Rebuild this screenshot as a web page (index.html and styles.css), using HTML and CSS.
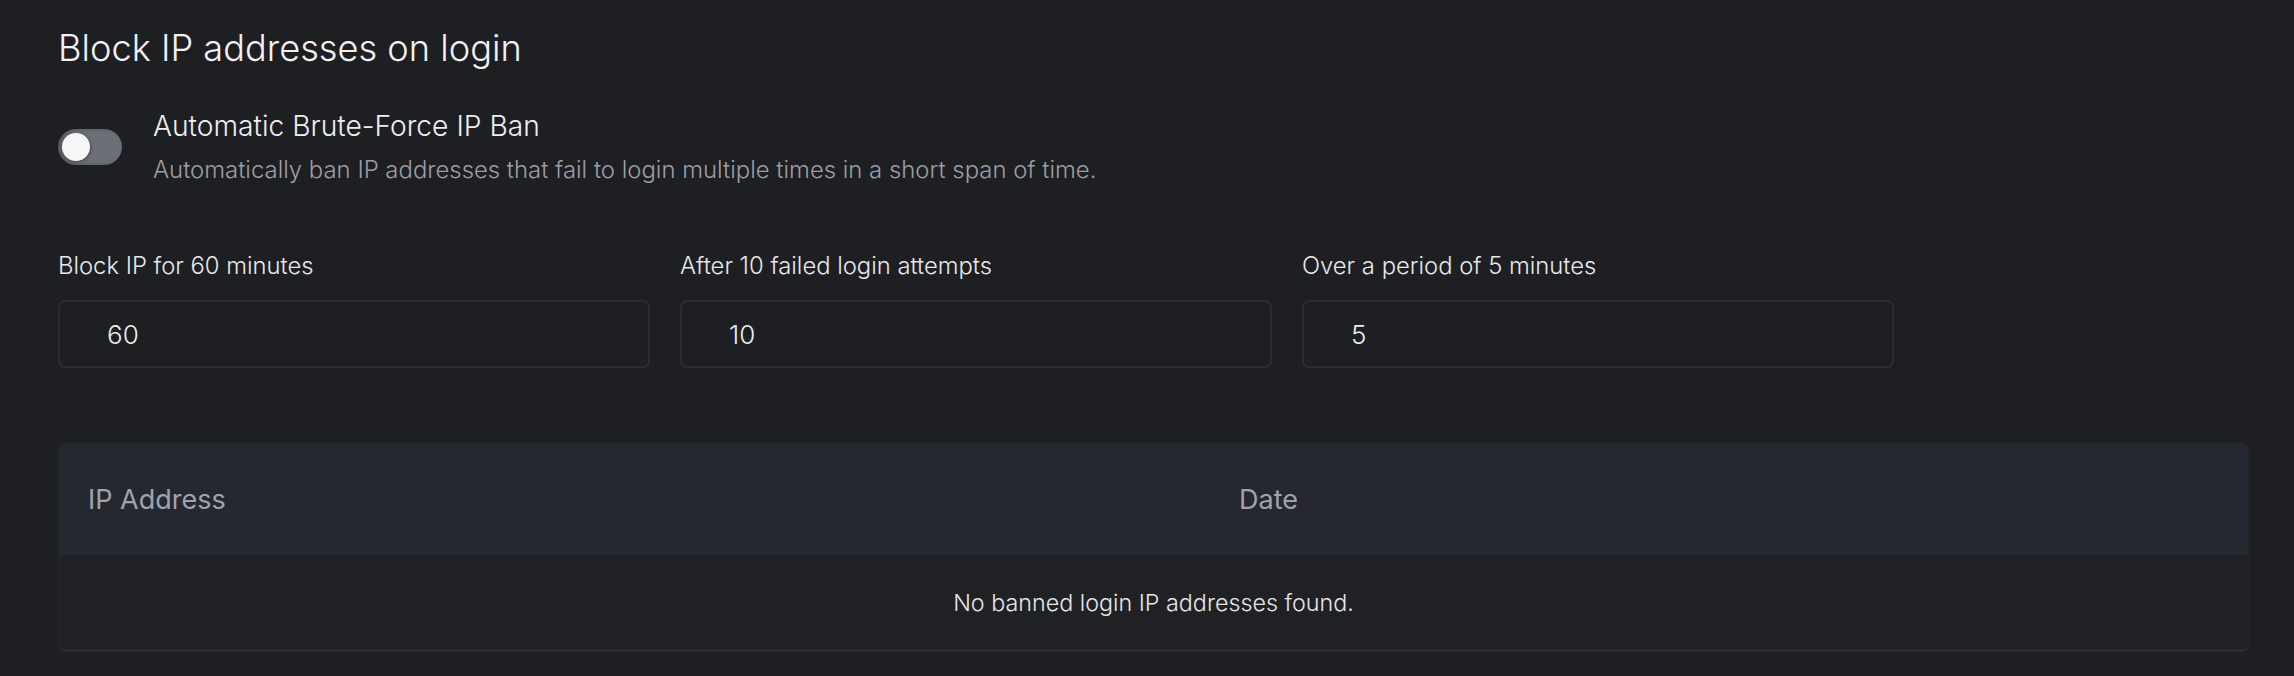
FILE: index.html
```html
<!DOCTYPE html>
<html lang="en">
<head>
<meta charset="utf-8">
<title>Block IP addresses on login</title>
<link rel="stylesheet" href="styles.css">
</head>
<body>
<div class="page">
  <h2 class="title">Block IP addresses on login</h2>

  <div class="toggle-row">
    <span class="switch"><span class="knob"></span></span>
    <div class="toggle-text">
      <div class="toggle-label">Automatic Brute-Force IP Ban</div>
      <div class="toggle-desc">Automatically ban IP addresses that fail to login multiple times in a short span of time.</div>
    </div>
  </div>

  <div class="fields">
    <label class="field">
      <span class="field-label">Block IP for 60 minutes</span>
      <input class="field-input" type="text" value="60">
    </label>
    <label class="field">
      <span class="field-label">After 10 failed login attempts</span>
      <input class="field-input" type="text" value="10">
    </label>
    <label class="field">
      <span class="field-label">Over a period of 5 minutes</span>
      <input class="field-input" type="text" value="5">
    </label>
  </div>

  <div class="table-wrap">
    <table class="bans">
      <thead>
        <tr>
          <th class="col-ip">IP Address</th>
          <th class="col-date">Date</th>
        </tr>
      </thead>
      <tbody>
        <tr>
          <td class="empty" colspan="2">No banned login IP addresses found.</td>
        </tr>
      </tbody>
    </table>
  </div>
</div>
</body>
</html>
```

FILE: styles.css
```css
* { box-sizing: border-box; }

html, body {
  margin: 0;
  background: #1e1f23;
}

body {
  font-family: "Inter", "Liberation Sans", sans-serif;
  font-weight: 300;
  color: #ececee;
}

.page {
  padding: 28px 45px 0 58px;
}

.title {
  margin: 0;
  font-size: 36.2px;
  line-height: 40px;
  font-weight: 300;
  color: #f2f2f4;
}

.toggle-row {
  display: flex;
  gap: 31px;
  margin-top: 42px;
}

.switch {
  flex: none;
  width: 64px;
  height: 36px;
  margin-top: 19px;
  border-radius: 18px;
  background: #6c6f77;
  box-shadow: inset 3px 0 4px rgba(0, 0, 0, 0.25);
  padding: 4px;
  display: flex;
}

.knob {
  width: 28px;
  height: 28px;
  border-radius: 50%;
  background: #f6f6f7;
  box-shadow: 1px 1px 3px rgba(0, 0, 0, 0.35);
}

.toggle-label {
  font-size: 28.2px;
  line-height: 32px;
  color: #eeeef0;
}

.toggle-desc {
  margin-top: 14px;
  font-size: 23.9px;
  line-height: 28px;
  color: #9b9ea6;
}

.fields {
  display: grid;
  grid-template-columns: repeat(3, 592px);
  column-gap: 30px;
  margin-top: 67px;
}

.field {
  display: flex;
  flex-direction: column;
  gap: 19px;
}

.field-label {
  font-size: 23.8px;
  line-height: 30px;
  color: #e8e8ea;
}

.field-input {
  height: 68px;
  width: 100%;
  border: 2px solid #2b2d34;
  border-radius: 7px;
  background: #1e1f23;
  padding: 0 0 0 47px;
  font-family: inherit;
  font-weight: 300;
  font-size: 26px;
  color: #ededef;
  outline: none;
}

.table-wrap {
  margin-top: 75px;
  border-radius: 7px;
  overflow: hidden;
  border: 1px solid #25262c;
  border-bottom: 3px solid #2a2b32;
}

.bans {
  width: 100%;
  border-collapse: collapse;
  table-layout: fixed;
}

.bans th {
  height: 111px;
  background: #262831;
  text-align: left;
  font-weight: 400;
  font-size: 27px;
  color: #9fa3ad;
  padding: 0 0 0 29px;
}

.col-ip { width: 1151px; }

.bans td {
  height: 94px;
  background: #202125;
}

.empty {
  text-align: center;
  font-size: 23.3px;
  color: #e6e6e8;
}
```
